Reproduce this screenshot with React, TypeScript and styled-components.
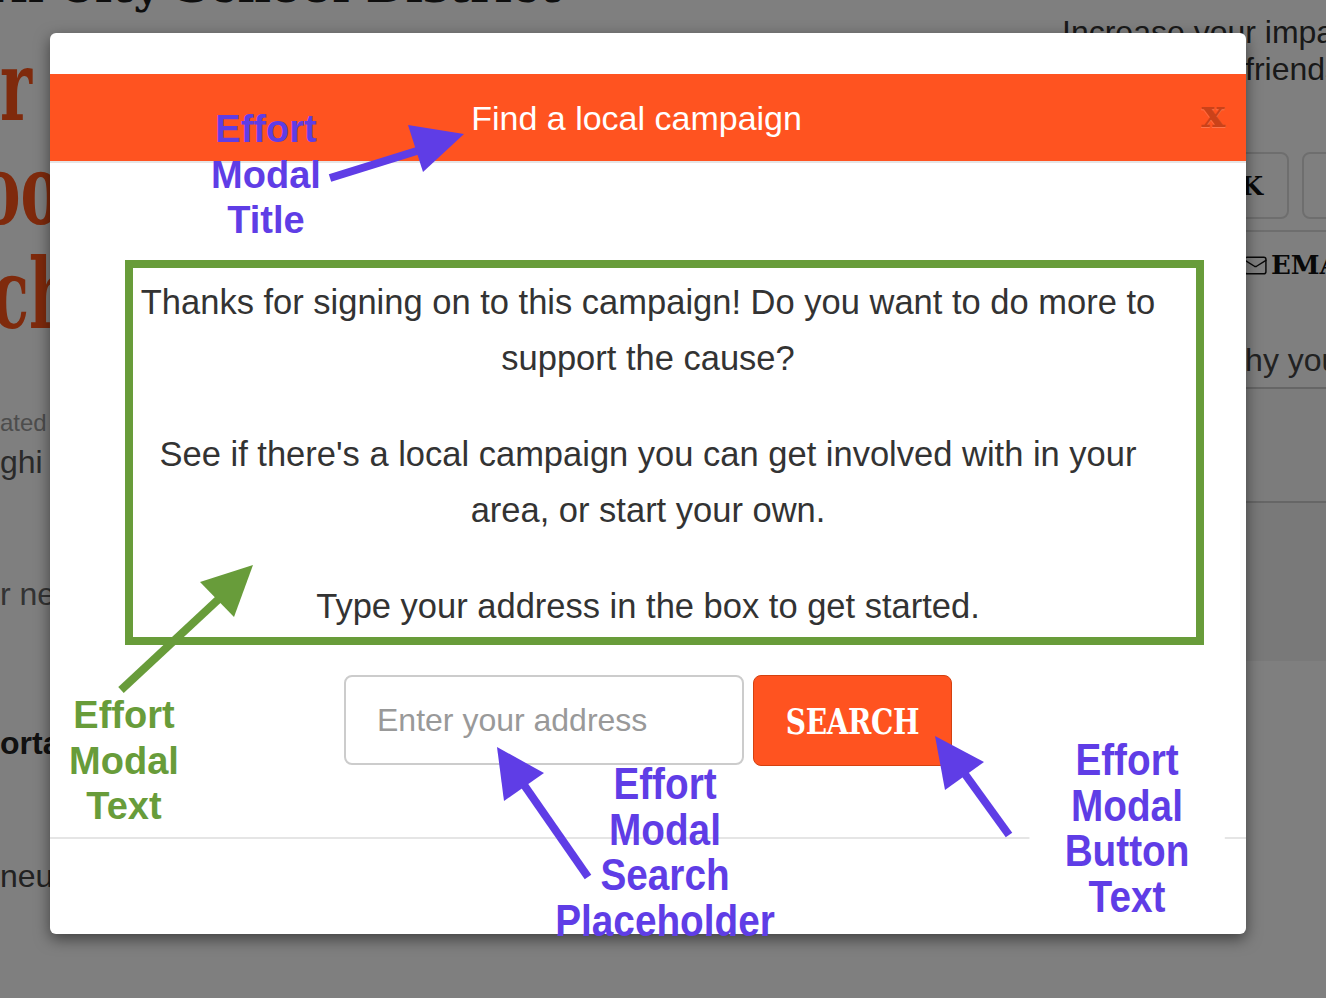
import styled, { createGlobalStyle } from "styled-components";
import { Mail } from "lucide-react";

const GlobalStyle = createGlobalStyle`
  html, body {
    margin: 0;
    padding: 0;
  }
  body {
    width: 1326px;
    height: 998px;
    overflow: hidden;
    background: #fff;
    font-family: "Liberation Sans", Arial, sans-serif;
  }
`;

const Stage = styled.div`
  position: relative;
  width: 1326px;
  height: 998px;
  overflow: hidden;
`;

/* ---------- page behind the dialog ---------- */

const Page = styled.div`
  display: grid;
  grid-template-columns: 1000px 326px;
  height: 100%;
`;

const MainCol = styled.main`
  display: flex;
  flex-direction: column;
  overflow: hidden;
  background: #fff;
`;

const DistrictName = styled.h1`
  margin: -42px 0 0 -14px;
  font-family: "DejaVu Serif", serif;
  font-size: 46px;
  font-weight: 700;
  color: #1c1c1c;
  white-space: nowrap;
  line-height: 56px;
`;

const BigTitle = styled.h2`
  margin: 20px 0 0 0;
  font-family: "DejaVu Serif", serif;
  font-weight: 700;
  color: #fe5418;
`;

const BigLine = styled.div<{ $shift: number }>`
  height: 104px;
  font-size: 98px;
  line-height: 104px;
  margin-left: ${(p) => p.$shift}px;
  transform: scaleX(0.62);
  transform-origin: left center;
  white-space: nowrap;
`;

const Fragment = styled.div<{ $size: number; $color: string; $bold?: boolean; $top: number }>`
  margin-top: ${(p) => p.$top}px;
  font-size: ${(p) => p.$size}px;
  line-height: ${(p) => p.$size + 6}px;
  color: ${(p) => p.$color};
  font-weight: ${(p) => (p.$bold ? 700 : 400)};
  white-space: nowrap;
`;

const Sidebar = styled.aside`
  display: flex;
  flex-direction: column;
  background: #fff;
  overflow: hidden;
`;

const ShareLine = styled.div<{ $indent: number }>`
  padding-left: ${(p) => p.$indent}px;
  font-size: 32px;
  line-height: 37px;
  color: #333;
  white-space: nowrap;
  &:first-child {
    margin-top: 14px;
  }
`;

const ShareButtons = styled.div`
  display: flex;
  gap: 13px;
  margin-top: 64px;
  padding-bottom: 11px;
  border-bottom: 2px solid #ddd;
`;

const ShareButton = styled.div`
  flex: none;
  width: 289px;
  height: 67px;
  border: 2px solid #ddd;
  border-radius: 8px;
  display: flex;
  align-items: center;
  justify-content: flex-end;
  padding-right: 24px;
  box-sizing: border-box;
  font-family: "DejaVu Serif", serif;
  font-weight: 700;
  font-size: 26px;
  color: #111;
`;

const EmailRow = styled.div`
  display: flex;
  align-items: center;
  gap: 3px;
  width: max-content;
  height: 30px;
  margin: 18px 0 0 243px;
  font-family: "DejaVu Serif", serif;
  font-weight: 700;
  font-size: 26px;
  color: #111;
  white-space: nowrap;

  & > svg {
    flex: none;
  }
`;

const WhyBox = styled.div`
  margin-top: 61px;
  padding: 0 0 8px 222px;
  font-size: 32px;
  line-height: 38px;
  color: #444;
  white-space: nowrap;
  border-bottom: 2px solid #ccc;
`;

const WhyField = styled.div`
  height: 112px;
  background: #f9f9f9;
  border-bottom: 2px solid #ccc;
`;

const WhyFooter = styled.div`
  height: 158px;
  background: #f3f3f3;
`;

const Backdrop = styled.div`
  position: absolute;
  inset: 0;
  background: rgba(0, 0, 0, 0.5);
`;

/* ---------- dialog ---------- */

const Modal = styled.div`
  position: absolute;
  left: 50px;
  top: 33px;
  width: 1196px;
  height: 901px;
  display: flex;
  flex-direction: column;
  background: #fff;
  border-radius: 6px;
  box-shadow: 0 5px 15px rgba(0, 0, 0, 0.5);
  overflow: hidden;
`;

const TitleBar = styled.div`
  margin-top: 41px;
  height: 87px;
  display: flex;
  align-items: center;
  padding: 0 21px 0 22px;
  background: #ff5320;
  border-bottom: 2px solid #e5e5e5;
`;

const Title = styled.h4`
  flex: 1;
  margin: 0;
  text-align: center;
  font-size: 34px;
  font-weight: 400;
  color: #fff;
  line-height: 40px;
`;

const Close = styled.span`
  font-family: "DejaVu Serif", serif;
  font-size: 40px;
  font-weight: 700;
  line-height: 1;
  color: #000;
  opacity: 0.2;
  text-shadow: 0 1px 0 #fff;
  margin-bottom: 10px;
`;

const Body = styled.div`
  display: flex;
  flex-direction: column;
  align-items: center;
  padding: 111px 0 71px;
`;

const Text = styled.div`
  max-width: 1040px;
  text-align: center;
  font-size: 34.5px;
  line-height: 56px;
  color: #333;
`;

const Para = styled.p`
  margin: 0 0 40px;
  &:last-child {
    margin-bottom: 0;
  }
`;

const SearchRow = styled.form`
  display: flex;
  gap: 9px;
  margin-top: 41px;
`;

const AddressInput = styled.input`
  width: 400px;
  height: 90px;
  box-sizing: border-box;
  padding: 0 0 0 31px;
  border: 2px solid #ccc;
  border-radius: 8px;
  font-family: "Liberation Sans", Arial, sans-serif;
  font-size: 32px;
  color: #333;
  outline: none;
  &::placeholder {
    color: #999;
  }
`;

const SearchButton = styled.button`
  width: 199px;
  height: 91px;
  border: 1px solid #d4410f;
  border-radius: 8px;
  background: #ff5320;
  color: #fff;
  cursor: pointer;
  padding: 0;
`;

const ButtonLabel = styled.span`
  display: inline-block;
  font-family: "DejaVu Serif", serif;
  font-weight: 700;
  font-size: 36px;
  letter-spacing: -0.5px;
  transform: scaleX(0.78);
`;

const Footer = styled.div`
  flex: 1;
  border-top: 2px solid #e5e5e5;
`;

/* ---------- annotations ---------- */

const Arrows = styled.svg`
  position: absolute;
  inset: 0;
  pointer-events: none;
`;

const Note = styled.div<{ $x: number; $y: number; $color: string; $narrow?: boolean; $boxed?: boolean }>`
  position: absolute;
  left: ${(p) => p.$x}px;
  top: ${(p) => p.$y}px;
  transform: translateX(-50%) ${(p) => (p.$narrow ? "scaleX(0.88)" : "")};
  font-size: ${(p) => (p.$narrow ? 44 : 38)}px;
  line-height: 45.5px;
  font-weight: 700;
  text-align: center;
  color: ${(p) => p.$color};
  background: ${(p) => (p.$boxed ? "#fff" : "transparent")};
  padding: ${(p) => (p.$boxed ? "0 40px" : "0")};
  white-space: nowrap;
`;

const PURPLE = "#5f3de6";
const GREEN = "#689c3a";

export default function App() {
  return (
    <Stage>
      <GlobalStyle />
      <Page>
        <MainCol>
          <DistrictName>rk City School District</DistrictName>
          <BigTitle>
            <BigLine $shift={0}>r</BigLine>
            <BigLine $shift={-20}>oo</BigLine>
            <BigLine $shift={-8}>ch</BigLine>
          </BigTitle>
          <Fragment $size={24} $color="#9a9a9a" $top={62}>ated by</Fragment>
          <Fragment $size={32} $color="#555" $top={5}>ghi</Fragment>
          <Fragment $size={32} $color="#666" $top={94}>r ne</Fragment>
          <Fragment $size={32} $color="#222" $bold $top={111}>orta</Fragment>
          <Fragment $size={32} $color="#444" $top={95}>neut</Fragment>
        </MainCol>
        <Sidebar>
          <ShareLine $indent={62}>Increase your impact by</ShareLine>
          <ShareLine $indent={245}>friends</ShareLine>
          <ShareButtons>
            <ShareButton>FACEBOOK</ShareButton>
            <ShareButton>TWITTER</ShareButton>
          </ShareButtons>
          <EmailRow>
            <Mail size={25} strokeWidth={1.4} color="#111" />
            EMAIL
          </EmailRow>
          <WhyBox>why you signed</WhyBox>
          <WhyField />
          <WhyFooter />
        </Sidebar>
      </Page>

      <Backdrop />

      <Modal>
        <TitleBar>
          <Title>Find a local campaign</Title>
          <Close>x</Close>
        </TitleBar>
        <Body>
          <Text>
            <Para>
              Thanks for signing on to this campaign! Do you want to do more to support the cause?
            </Para>
            <Para>
              See if there's a local campaign you can get involved with in your area, or start your own.
            </Para>
            <Para>Type your address in the box to get started.</Para>
          </Text>
          <SearchRow onSubmit={(e) => e.preventDefault()}>
            <AddressInput placeholder="Enter your address" />
            <SearchButton type="submit">
              <ButtonLabel>SEARCH</ButtonLabel>
            </SearchButton>
          </SearchRow>
        </Body>
        <Footer />
      </Modal>

      <Arrows width="1326" height="998" viewBox="0 0 1326 998">
        <rect x="129" y="264" width="1071" height="377" fill="none" stroke={GREEN} strokeWidth="8" />
        <line x1="330" y1="178" x2="420" y2="150" stroke={PURPLE} strokeWidth="8" />
        <polygon points="408,125 464,134 423,172" fill={PURPLE} />
        <line x1="121" y1="690" x2="222" y2="596" stroke={GREEN} strokeWidth="8" />
        <polygon points="253,565 200,582 234,617" fill={GREEN} />
        <line x1="588" y1="877" x2="522" y2="782" stroke={PURPLE} strokeWidth="8" />
        <polygon points="497,747 544,773 504,801" fill={PURPLE} />
        <line x1="1009" y1="835" x2="962" y2="770" stroke={PURPLE} strokeWidth="8" />
        <polygon points="935,736 984,762 945,790" fill={PURPLE} />
      </Arrows>

      <Note $x={266} $y={107} $color={PURPLE}>
        Effort
        <br />
        Modal
        <br />
        Title
      </Note>
      <Note $x={124} $y={693} $color={GREEN}>
        Effort
        <br />
        Modal
        <br />
        Text
      </Note>
      <Note $x={665} $y={761} $color={PURPLE} $narrow>
        Effort
        <br />
        Modal
        <br />
        Search
        <br />
        Placeholder
      </Note>
      <Note $x={1127} $y={737} $color={PURPLE} $narrow $boxed>
        Effort
        <br />
        Modal
        <br />
        Button
        <br />
        Text
      </Note>
    </Stage>
  );
}
